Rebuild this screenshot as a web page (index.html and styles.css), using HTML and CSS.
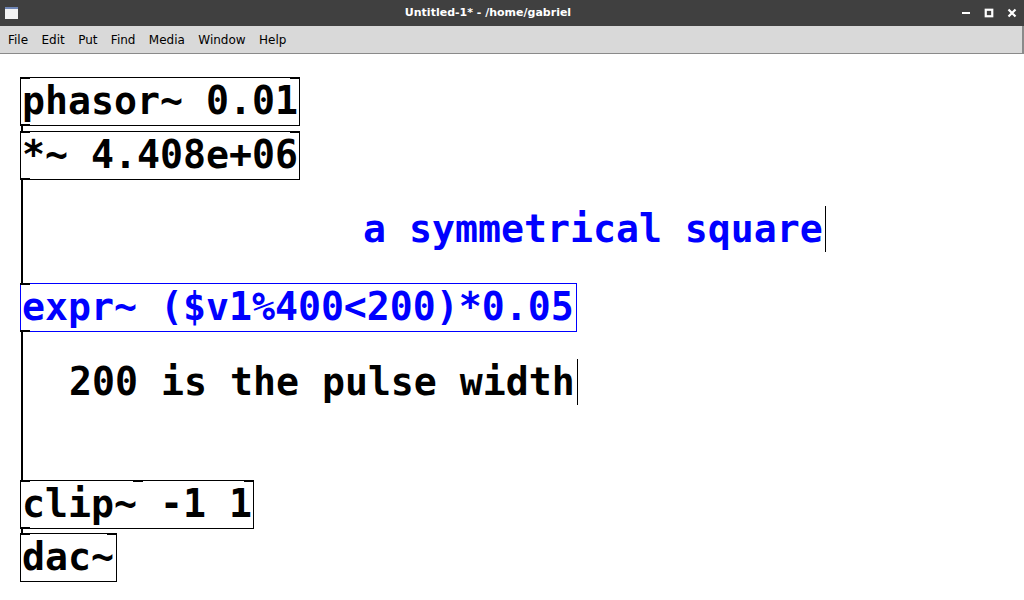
FILE: index.html
```html
<!DOCTYPE html>
<html>
<head>
<meta charset="utf-8">
<link rel="stylesheet" href="styles.css">
</head>
<body>
<div class="window">
  <div class="titlebar">
    <div class="winicon"></div>
    <div class="title">Untitled-1* - /home/gabriel</div>
    <div class="controls">
      <svg width="10" height="10" viewBox="0 0 10 10"><rect x="1" y="4" width="8" height="2" fill="#fff"/></svg>
      <svg width="10" height="10" viewBox="0 0 10 10"><rect x="1.75" y="1.75" width="6.5" height="6.5" fill="none" stroke="#fff" stroke-width="2.2"/></svg>
      <svg width="10" height="10" viewBox="0 0 10 10"><path d="M1.5 1.5 L8.5 8.5 M8.5 1.5 L1.5 8.5" stroke="#fff" stroke-width="2.2"/></svg>
    </div>
  </div>
  <div class="menubar">
    <span>File</span><span>Edit</span><span>Put</span><span>Find</span><span>Media</span><span>Window</span><span>Help</span>
  </div>
  <div class="canvas">
    <div class="wire" style="left:21px;top:70px;height:8px"></div>
    <div class="wire" style="left:21px;top:125px;height:105px"></div>
    <div class="wire" style="left:21px;top:276px;height:151px"></div>
    <div class="wire" style="left:21px;top:473px;height:7px"></div>

    <div class="obj" style="left:20px;top:23px;width:280px">phasor~ 0.01<i class="in l"></i><i class="in r"></i><i class="out l"></i></div>
    <div class="obj" style="left:20px;top:77px;width:280px">*~ 4.408e+06<i class="in l"></i><i class="in r"></i><i class="out l"></i></div>
    <div class="obj sel" style="left:20px;top:229px;width:557px">expr~ ($v1%400&lt;200)*0.05<i class="in l"></i><i class="out l"></i></div>
    <div class="obj" style="left:20px;top:426px;width:234px">clip~ -1 1<i class="in l"></i><i class="in m"></i><i class="in r"></i><i class="out l"></i></div>
    <div class="obj" style="left:20px;top:479px;width:97px">dac~<i class="in l"></i><i class="in r"></i></div>

    <div class="comment blue" style="left:361px;top:152px">a symmetrical square</div>
    <div class="comment" style="left:67px;top:305px">200 is the pulse width</div>
  </div>
</div>
</body>
</html>
```
FILE: styles.css
```css
html, body {
  margin: 0;
  padding: 0;
  background: #ffffff;
}
.window {
  width: 1024px;
  height: 600px;
  display: flex;
  flex-direction: column;
  overflow: hidden;
}
.titlebar {
  height: 26px;
  background: #404040;
  display: flex;
  align-items: center;
  position: relative;
  flex: none;
}
.winicon {
  width: 13px;
  height: 10px;
  margin-left: 5px;
  background: #f4f4f4;
  border-top: 2px solid #6f86b6;
}
.title {
  position: absolute;
  left: 0;
  right: 48px;
  text-align: center;
  color: #ffffff;
  font-family: "DejaVu Sans", sans-serif;
  font-weight: bold;
  font-size: 11px;
  top: 6px;
}
.controls {
  margin-left: auto;
  display: flex;
  gap: 13px;
  margin-right: 7px;
}
.controls svg {
  display: block;
}
.menubar {
  height: 27px;
  background: #d9d9d9;
  border-bottom: 1px solid #8a8a8a;
  border-right: 2px solid #8a8a8a;
  display: flex;
  align-items: center;
  padding-left: 8px;
  gap: 13.4px;
  font-family: "DejaVu Sans", sans-serif;
  font-size: 12px;
  color: #000;
  flex: none;
}
.canvas {
  position: relative;
  flex: 1;
  background: #fff;
  font-family: "DejaVu Sans Mono", monospace;
  font-weight: bold;
  font-size: 38.2px;
}
.obj {
  position: absolute;
  box-sizing: border-box;
  height: 49px;
  border: 1px solid #000;
  padding: 0 0 0 1px;
  line-height: 46px;
  color: #000;
  white-space: nowrap;
  background: #fff;
}
.obj.sel {
  border-color: #0000ff;
  color: #0000ff;
}
.obj i {
  position: absolute;
  width: 10px;
  height: 2px;
  background: #000;
}
.obj i.in { top: -1px; }
.obj i.out { bottom: -1px; }
.obj i.l { left: -1px; }
.obj i.r { right: -1px; }
.obj i.m { left: 112px; }
.wire {
  position: absolute;
  width: 2px;
  background: #000;
}
.comment {
  position: absolute;
  line-height: 46px;
  padding-left: 2px;
  padding-right: 2px;
  border-right: 1px solid #000;
  color: #000;
  white-space: nowrap;
}
.comment.blue {
  color: #0000ff;
}
```
